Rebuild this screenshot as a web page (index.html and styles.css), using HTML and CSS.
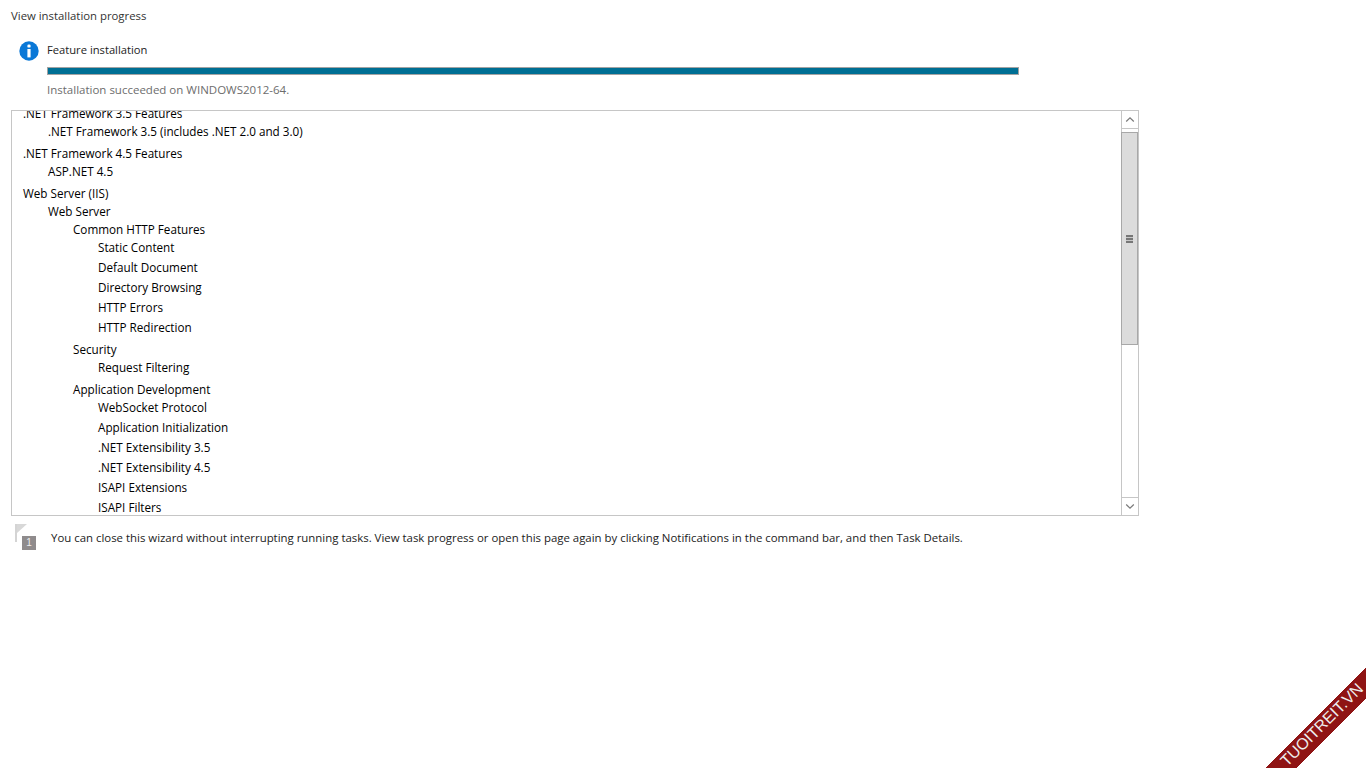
FILE: index.html
```html
<!DOCTYPE html>
<html lang="en">
<head>
<meta charset="utf-8">
<title>View installation progress</title>
<link rel="stylesheet" href="styles.css">
</head>
<body>
<main class="page">
  <h1 class="title">View installation progress</h1>
  <section class="status">
    <svg class="info-icon" width="20" height="20" viewBox="0 0 20 20" aria-hidden="true">
      <circle cx="10" cy="10" r="9.7" fill="#0a78d7"/>
      <rect x="8.4" y="3.6" width="3.2" height="3" rx="1.2" fill="#fff"/>
      <rect x="8.4" y="8" width="3.2" height="8.4" fill="#fff"/>
    </svg>
    <div class="status-body">
      <div class="status-name">Feature installation</div>
      <div class="progress"><div class="progress-fill"></div></div>
      <div class="status-note">Installation succeeded on WINDOWS2012-64.</div>
    </div>
  </section>
  <section class="listbox">
    <div class="viewport">
      <ul class="tree">
        <li>.NET Framework 3.5 Features
          <ul><li>.NET Framework 3.5 (includes .NET 2.0 and 3.0)</li></ul>
        </li>
        <li>.NET Framework 4.5 Features
          <ul><li>ASP.NET 4.5</li></ul>
        </li>
        <li>Web Server (IIS)
          <ul>
            <li>Web Server
              <ul>
                <li>Common HTTP Features
                  <ul>
                    <li>Static Content</li>
                    <li>Default Document</li>
                    <li>Directory Browsing</li>
                    <li>HTTP Errors</li>
                    <li>HTTP Redirection</li>
                  </ul>
                </li>
                <li>Security
                  <ul><li>Request Filtering</li></ul>
                </li>
                <li>Application Development
                  <ul>
                    <li>WebSocket Protocol</li>
                    <li>Application Initialization</li>
                    <li>.NET Extensibility 3.5</li>
                    <li>.NET Extensibility 4.5</li>
                    <li>ISAPI Extensions</li>
                    <li>ISAPI Filters</li>
                  </ul>
                </li>
              </ul>
            </li>
          </ul>
        </li>
      </ul>
    </div>
    <div class="scrollbar">
      <div class="scroll-btn">
        <svg width="10" height="7" viewBox="0 0 10 7" aria-hidden="true"><path d="M1.2 5.5 L5 1.8 L8.8 5.5" fill="none" stroke="#7a7a7a" stroke-width="1.2"/></svg>
      </div>
      <div class="track">
        <div class="thumb"><span class="grip"></span></div>
      </div>
      <div class="scroll-btn scroll-btn-end">
        <svg width="10" height="7" viewBox="0 0 10 7" aria-hidden="true"><path d="M1.2 1.5 L5 5.2 L8.8 1.5" fill="none" stroke="#7a7a7a" stroke-width="1.2"/></svg>
      </div>
    </div>
  </section>
  <section class="hint">
    <svg class="flag-icon" width="22" height="27" viewBox="0 0 22 27" aria-hidden="true">
      <rect x="0" y="0" width="2" height="18" fill="#d4d4d4"/>
      <path d="M2 0 L12 0 L2 9 Z" fill="#d8d8d8"/>
      <rect x="7" y="12" width="14" height="14" fill="#8f8b8c"/>
    </svg>
    <span class="badge">1</span>
    <p class="hint-text">You can close this wizard without interrupting running tasks. View task progress or open this page again by clicking Notifications in the command bar, and then Task Details.</p>
  </section>
</main>
<aside class="ribbon"><span class="ribbon-text">TUOITREIT.VN</span></aside>
</body>
</html>
```
FILE: styles.css
```css
* { box-sizing: border-box; }
html, body { margin: 0; padding: 0; height: 100%; }
body {
  background: #fff;
  color: #000;
  font-family: "Open Sans", "Noto Sans", "Liberation Sans", sans-serif;
  font-size: 12px;
  overflow: hidden;
  position: relative;
}
.page { padding: 7px 0 0 11px; width: 1139px; }
.title {
  margin: 0;
  font-size: 11.35px;
  font-weight: 400;
  line-height: 18px;
  color: #333;
}
.status { display: flex; margin: 16px 0 0 8px; }
.info-icon { flex: none; }
.status-body { margin-left: 8px; width: 972px; }
.status-name { line-height: 18px; font-size: 11.2px; color: #222; }
.progress { height: 8px; margin-top: 8px; border: 1px solid #a3a3a3; background: #fff; }
.progress-fill { height: 100%; background: #006f94; }
.status-note { margin-top: 6px; line-height: 18px; font-size: 11.5px; color: #6d6d6d; }
.listbox {
  display: flex;
  margin-top: 11px;
  height: 406px;
  border: 1px solid #c6c6c6;
}
.viewport { flex: 1; overflow: hidden; padding: 0 0 0 11px; }
.tree { margin-top: -7px; }
.tree, .tree ul { list-style: none; padding: 0; }
.tree ul { margin: 0; padding-left: 25px; }
.tree li { line-height: 18px; font-size: 11.7px; color: #000; white-space: nowrap; }
.tree > li + li { margin-top: 4px; }
.tree ul ul li + li { margin-top: 4px; }
.tree ul ul ul li { margin-top: 0; }
.tree ul ul ul li + li { margin-top: 2px; }
.scrollbar {
  flex: none;
  width: 17px;
  display: flex;
  flex-direction: column;
  border-left: 1px solid #c6c6c6;
}
.scroll-btn {
  flex: none;
  height: 18px;
  display: flex;
  align-items: center;
  justify-content: center;
  background: #fff;
  border-bottom: 1px solid #c6c6c6;
}
.scroll-btn-end { border-top: 1px solid #c6c6c6; border-bottom: 0; }
.track { flex: 1; padding-top: 3px; }
.thumb {
  height: 213px;
  margin-left: -1px;
  background: #dcdcdc;
  border: 1px solid #a8a8a8;
  display: flex;
  align-items: center;
  justify-content: center;
}
.grip {
  display: block;
  width: 7px;
  height: 8px;
  background: repeating-linear-gradient(#777 0 2px, #c8c8c8 2px 3px);
}
.hint { display: flex; align-items: flex-start; position: relative; margin: 8px 0 0 4px; }
.flag-icon { flex: none; }
.badge {
  position: absolute;
  left: 7px;
  top: 12px;
  width: 14px;
  height: 14px;
  color: #eee;
  font-size: 10px;
  line-height: 14px;
  text-align: center;
  font-family: "Liberation Sans", sans-serif;
}
.hint-text {
  margin: 5px 0 0 14px;
  font-size: 11.41px;
  line-height: 18px;
  color: #222;
  white-space: nowrap;
}
.ribbon {
  position: absolute;
  right: 0;
  bottom: 0;
  width: 100px;
  height: 101px;
  overflow: hidden;
  background: linear-gradient(135deg, transparent 0 50%, #8f1414 50% 65.5%, transparent 65.5%);
}
.ribbon-text {
  position: absolute;
  left: -9px;
  top: 49px;
  width: 130px;
  text-align: center;
  color: #eeeeee;
  font-family: "Liberation Sans", sans-serif;
  font-size: 16px;
  line-height: 18px;
  transform: rotate(-45deg);
  white-space: nowrap;
}
```
